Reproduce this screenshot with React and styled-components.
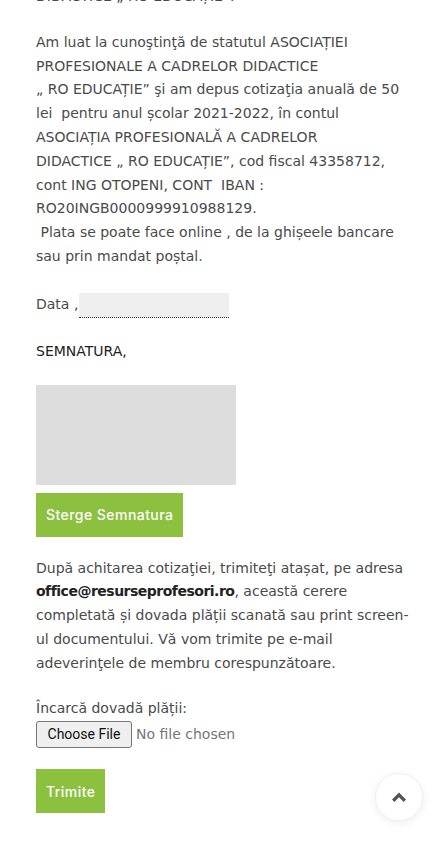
import React from "react";
import styled, { createGlobalStyle } from "styled-components";

const Global = createGlobalStyle`
  html, body { margin: 0; padding: 0; background: #fff; }
  body { font-family: "DejaVu Sans", "Liberation Sans", sans-serif; overflow: hidden; }
`;

const Page = styled.main`
  width: 444px;
  height: 850px;
  box-sizing: border-box;
  padding: 0 36px;
  overflow: hidden;
`;

const Content = styled.div`
  margin-top: -15px;
  font-size: 14px;
  line-height: 23.8px;
  color: #4a4a4a;
`;

const Para = styled.p`
  margin: 0 0 ${(p) => p.$gap ?? 24}px;
  white-space: nowrap;
`;

const Strong = styled.strong`
  font-weight: 700;
  color: #222;
  letter-spacing: -0.5px;
`;

const DateRow = styled.div`
  display: flex;
  align-items: center;
  gap: 1px;
  height: 25px;
  margin: 0 0 22px;
`;

const DateInput = styled.input`
  width: 150px;
  height: 25px;
  box-sizing: border-box;
  border: none;
  border-bottom: 1px dotted #333;
  background: #efefef;
  font: inherit;
  padding: 0 4px;
`;

const Heading = styled.div`
  color: #222;
  margin-bottom: 21px;
`;

const Canvas = styled.div`
  width: 200px;
  height: 100px;
  background: #dddddd;
`;

const GreenButton = styled.button`
  display: block;
  border: none;
  background: #8bc13f;
  color: #fff;
  font-family: "Inter", "Roboto", sans-serif;
  font-weight: 500;
  font-size: 14px;
  letter-spacing: 0.45px;
  height: 44px;
  padding: 0 10px;
  margin-top: ${(p) => p.$top}px;
  cursor: pointer;
`;

const UploadLabel = styled.div``;

const FileRow = styled.div`
  display: flex;
  align-items: center;
  gap: 4px;
  margin-top: 1px;
`;

const FileButton = styled.span`
  display: inline-flex;
  align-items: center;
  justify-content: center;
  box-sizing: border-box;
  width: 96px;
  height: 27px;
  border: 1px solid #767676;
  border-radius: 3px;
  background: #efefef;
  color: #111;
  font-family: "Roboto", "Liberation Sans", sans-serif;
  font-size: 14px;
`;

const FileStatus = styled.span`
  color: #777;
`;

const ToTop = styled.button`
  position: fixed;
  right: 21px;
  bottom: 29px;
  width: 48px;
  height: 48px;
  border-radius: 50%;
  border: 1px solid #f1f1f1;
  background: #fff;
  box-shadow: 0 2px 10px rgba(0, 0, 0, 0.07);
  display: flex;
  align-items: center;
  justify-content: center;
  padding: 0;
`;

export default function App() {
  return (
    <>
      <Global />
      <Page>
        <Content>
          <Para $gap={22}>DIDACTICE „ RO EDUCAȚIE”.</Para>
          <Para>
            Am luat la cunoştinţă de statutul ASOCIAȚIEI
            <br />
            PROFESIONALE A CADRELOR DIDACTICE
            <br />„ RO EDUCAȚIE” şi am depus cotizaţia anuală de 50
            <br />
            lei&nbsp; pentru anul școlar 2021-2022, în contul
            <br />
            ASOCIAȚIA PROFESIONALĂ A CADRELOR
            <br />
            DIDACTICE „ RO EDUCAȚIE”, cod fiscal 43358712,
            <br />
            cont ING OTOPENI, CONT&nbsp; IBAN :
            <br />
            RO20INGB0000999910988129.
            <br />
            &nbsp;Plata se poate face online , de la ghișeele bancare
            <br />
            sau prin mandat poștal.
          </Para>
          <DateRow>
            <span>Data ,</span>
            <DateInput type="text" />
          </DateRow>
          <Heading>SEMNATURA,</Heading>
          <Canvas />
          <GreenButton $top={8}>Sterge Semnatura</GreenButton>
          <Para $gap={21} style={{ marginTop: 20 }}>
            După achitarea cotizaţiei, trimiteţi atașat, pe adresa
            <br />
            <Strong>office@resurseprofesori.ro</Strong>, această cerere
            <br />
            completată și dovada plății scanată sau print screen-
            <br />
            ul documentului. Vă vom trimite pe e-mail
            <br />
            adeverinţele de membru corespunzătoare.
          </Para>
          <UploadLabel>Încarcă dovadă plății:</UploadLabel>
          <FileRow>
            <FileButton>Choose File</FileButton>
            <FileStatus>No file chosen</FileStatus>
          </FileRow>
          <GreenButton $top={21}>Trimite</GreenButton>
        </Content>
        <ToTop aria-label="Înapoi sus">
          <svg width="16" height="12" viewBox="0 0 16 12">
            <path d="M8 1.5 L15 8.5 L12.6 10.9 L8 6.3 L3.4 10.9 L1 8.5 Z" fill="#555" />
          </svg>
        </ToTop>
      </Page>
    </>
  );
}
